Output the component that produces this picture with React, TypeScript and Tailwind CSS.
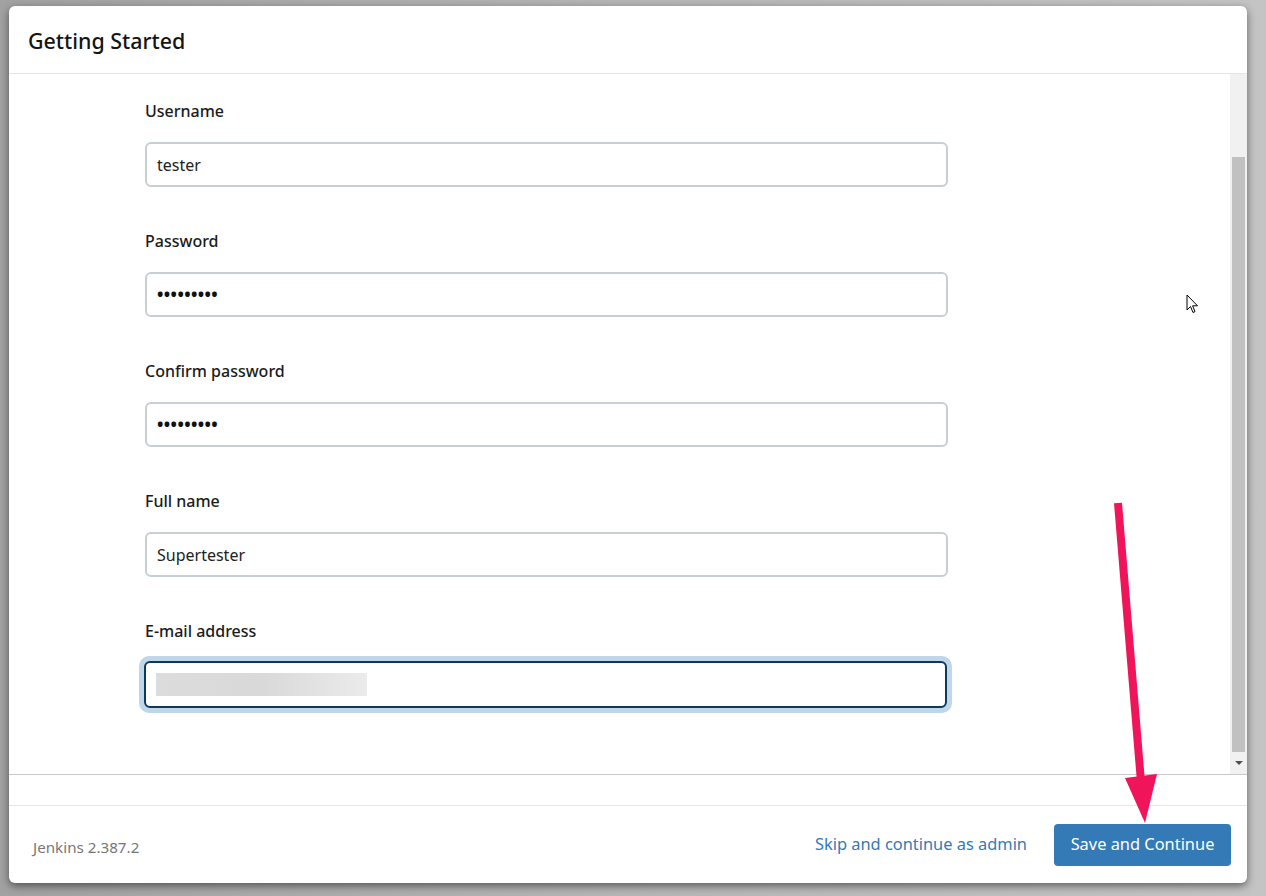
import React from 'react';

const FONT = { fontFamily: '"Noto Sans", "Open Sans", sans-serif' };

interface FieldProps {
  label: string;
  value?: string;
  dots?: boolean;
  focused?: boolean;
}

function Field({ label, value, dots, focused }: FieldProps) {
  if (focused) {
    return (
      <div className="flex flex-col">
        <label className="h-6 text-[16px] leading-6 font-medium text-[#1b1b1b]">{label}</label>
        {/* focus ring */}
        <div className="-ml-[6px] mt-[13px] w-[813px] rounded-[10px] bg-[#bfd7e8] p-[5px]">
          <div className="flex h-[47px] items-center rounded-[6px] border-2 border-[#0b3a5d] bg-white px-[10px]">
            <div className="h-[23px] w-[211px] bg-gradient-to-r from-[#dcdcdc] via-[#d9d9da] to-[#ebebeb]" />
          </div>
        </div>
      </div>
    );
  }
  return (
    <div className="flex flex-col">
      <label className="h-6 text-[16px] leading-6 font-medium text-[#1b1b1b]">{label}</label>
      <div className="mt-[19px] flex h-[45px] w-[803px] items-center rounded-[6px] border-2 border-[#c6cfd4] px-[10px]">
        {dots ? (
          <span className="text-[17px] leading-none font-bold tracking-[0.4px] text-[#111]">•••••••••</span>
        ) : (
          <span className="text-[16px] text-[#222]">{value}</span>
        )}
      </div>
    </div>
  );
}

export default function App() {
  return (
    <div className="relative h-[896px] w-[1266px] overflow-hidden bg-gradient-to-r from-[#a2a2a2] via-[#b6b6b6] to-[#c4c4c4] pl-[9px] pt-[6px]" style={FONT}>
      <div className="flex h-[877px] w-[1238px] flex-col overflow-hidden rounded-[6px] bg-white shadow-[0_3px_9px_rgba(0,0,0,0.5)]">
        {/* header */}
        <div className="flex h-[68px] shrink-0 items-center border-b border-[#e5e5e5] pl-[19px] pt-[4px]">
          <h1 className="text-[21.4px] font-medium text-[#141414]">Getting Started</h1>
        </div>

        {/* body with scrollbar */}
        <div className="flex h-[701px] shrink-0 border-b border-[#c9c9c9]">
          <div className="flex flex-1 flex-col gap-[42px] pl-[136px] pt-[25px]">
            <Field label="Username" value="tester" />
            <Field label="Password" dots />
            <Field label="Confirm password" dots />
            <Field label="Full name" value="Supertester" />
            <Field label="E-mail address" focused />
          </div>
          <div className="flex w-[17px] flex-col bg-[#f1f1f1]">
            <div className="h-[83px]" />
            <div className="mx-[2px] h-[595px] bg-[#c1c1c1]" />
            <div className="flex flex-1 items-center justify-center">
              <div className="h-0 w-0 border-x-[4px] border-t-[4px] border-x-transparent border-t-[#505050]" />
            </div>
          </div>
        </div>

        <div className="h-[31px] shrink-0 border-b border-[#e5e5e5]" />

        {/* footer */}
        <div className="flex flex-1 items-center pl-[24px] pr-[16px]">
          <span className="pt-[6px] text-[15.2px] text-[#777]">Jenkins 2.387.2</span>
          <div className="ml-auto flex items-center gap-[27px]">
            <a className="text-[16.4px] text-[#337ab7]">Skip and continue as admin</a>
            <button className="h-[42px] w-[177px] rounded-[4px] bg-[#337ab7] text-[16.4px] text-white">
              Save and Continue
            </button>
          </div>
        </div>
      </div>

      {/* annotation arrow */}
      <svg className="pointer-events-none absolute left-0 top-0" width="1266" height="896">
        <line x1="1118" y1="503" x2="1141" y2="782" stroke="#f0145a" strokeWidth="8" />
        <polygon points="1125,778 1157,774 1145,823" fill="#f0145a" />
      </svg>

      {/* mouse cursor */}
      <svg className="pointer-events-none absolute left-[1186px] top-[294px]" width="14" height="22" viewBox="0 0 14 22">
        <path d="M1 1 L1 16 L4.5 12.5 L7 18.5 L9 17.6 L6.6 11.8 L11.5 11.8 Z" fill="#fff" stroke="#000" strokeWidth="1" strokeLinejoin="round" />
      </svg>
    </div>
  );
}
